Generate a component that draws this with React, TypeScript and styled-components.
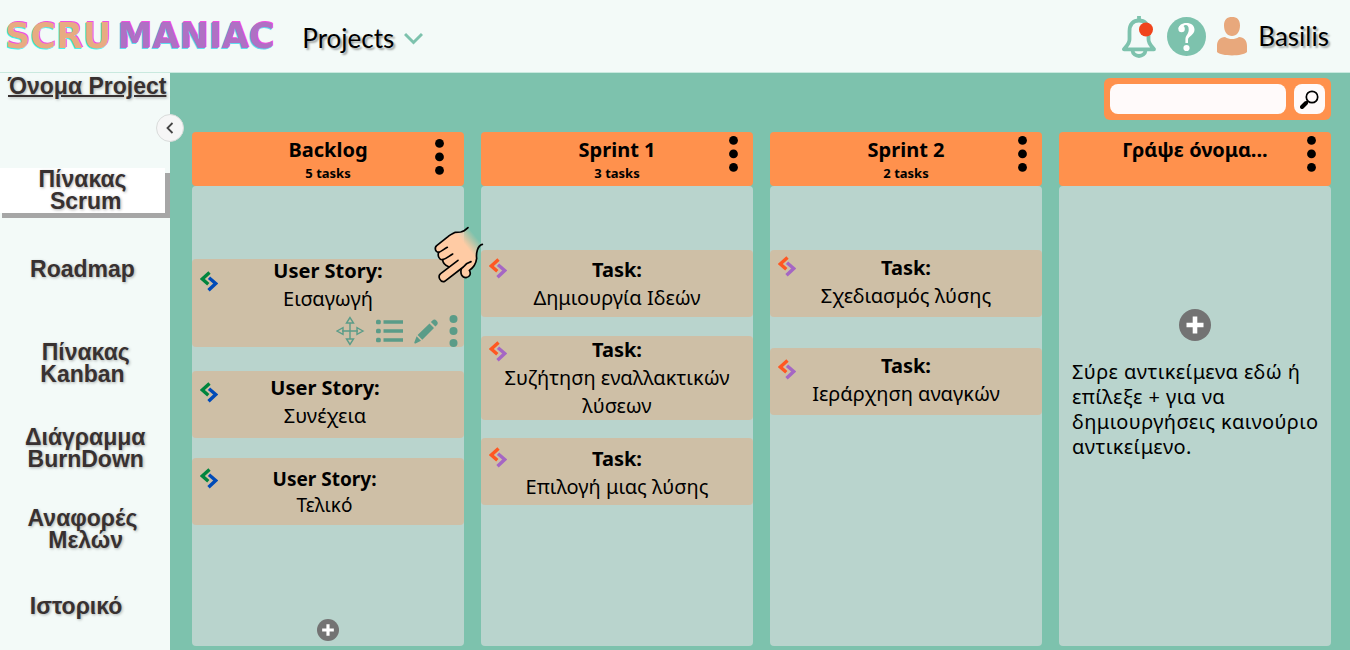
import React from "react";
import styled, { createGlobalStyle } from "styled-components";

const GlobalStyle = createGlobalStyle`
  * { box-sizing: border-box; }
  body { margin: 0; background: #7dc2ad; color: #000; font-family: "Noto Sans", sans-serif; }
  button { border: 0; padding: 0; background: none; color: inherit; font: inherit; cursor: pointer; }
  svg { display: block; flex: none; }
  h1, h2, h3, p { margin: 0; }
`;

const Page = styled.div`
  min-height: 100vh;
  display: flex;
  flex-direction: column;
`;

const TopBar = styled.header`
  height: 73px;
  display: flex;
  align-items: center;
  padding: 0 21px 0 5px;
  background: #f3faf8;
  border-bottom: 1px solid #c9e9df;
`;

const Logo = styled.a`
  display: flex;
  gap: 6px;
  font: bold 35px/40px "DejaVu Sans", sans-serif;
  text-decoration: none;
`;

const LogoWord = styled.span<{ $color: string; $left: string; $right: string }>`
  color: ${(p) => p.$color};
  text-shadow: -1px 1px 0 ${(p) => p.$left}, 1px -1px 0 ${(p) => p.$right};
`;

const TopText = styled.span`
  font: 26px/32px Lato, sans-serif;
  text-shadow: 2px 2px 2px rgba(0, 0, 0, 0.35);
`;

const ProjectsButton = styled.button`
  display: flex;
  align-items: center;
  gap: 10px;
  margin-left: 28px;
  padding-top: 4px;
`;

const Account = styled.div`
  display: flex;
  align-items: center;
  gap: 11px;
  margin-left: auto;
`;

const Main = styled.div`
  flex: 1;
  display: flex;
`;

const Sidebar = styled.aside`
  position: relative;
  flex: none;
  width: 170px;
  background: #f3faf8;
  color: #383131;
  font: bold 23px/22px "Liberation Sans", sans-serif;
  text-shadow: 1px 1px 3px rgba(0, 0, 0, 0.3);
`;

const ProjectName = styled.a`
  display: block;
  margin-top: 2px;
  padding-left: 8px;
  color: inherit;
  white-space: nowrap;
  text-decoration: underline;
  text-decoration-thickness: 2px;
`;

const Nav = styled.nav`
  margin: 71px 5px 0 0;
`;

const NavLink = styled.a<{ $space: number; $active?: boolean }>`
  display: block;
  margin-top: ${(p) => p.$space}px;
  padding-bottom: ${(p) => (p.$active ? 1 : 0)}px;
  background: ${(p) => (p.$active ? "#fff" : "none")};
  box-shadow: ${(p) => (p.$active ? "5px 5px 0 #a6a6a6, 2px 5px 0 #a6a6a6" : "none")};
  color: inherit;
  text-align: center;
  text-decoration: none;
  white-space: pre;
`;

const CollapseButton = styled.button`
  position: absolute;
  top: 41px;
  right: -14px;
  width: 28px;
  height: 28px;
  display: grid;
  place-items: center;
  border: 1px solid #d9dcdb;
  border-radius: 50%;
  background: #f6f6f6;
`;

const Board = styled.main`
  flex: 1;
  min-width: 0;
  display: flex;
  flex-direction: column;
  gap: 12px;
  padding: 5px 19px 4px 22px;
  background: #7dc2ad;
`;

const Search = styled.form`
  align-self: flex-end;
  display: flex;
  gap: 8px;
  padding: 6px;
  border-radius: 6px;
  background: #ff914d;
`;

const SearchInput = styled.input`
  width: 176px;
  height: 30px;
  padding: 0 8px;
  border: 0;
  border-radius: 8px;
  background: #fffafa;
  font: 16px/20px "Noto Sans", sans-serif;
`;

const SearchButton = styled.button`
  width: 31px;
  height: 30px;
  display: grid;
  place-items: center;
  border-radius: 8px;
  background: #fffafa;
`;

const Columns = styled.div`
  flex: 1;
  display: grid;
  grid-template-columns: repeat(4, minmax(0, 1fr));
  gap: 17px;
`;

const Column = styled.section`
  display: flex;
  flex-direction: column;
`;

const ColumnHeader = styled.header`
  display: grid;
  height: 54px;
  border-radius: 4px;
  background: #ff914d;

  > * { grid-area: 1 / 1; }
`;

const ColumnHeading = styled.div`
  padding-top: 4px;
  text-align: center;
  font-weight: bold;
`;

const ColumnTitle = styled.h2`
  font-size: 20px;
  line-height: 28px;
`;

const ColumnCount = styled.p`
  font-size: 13px;
  line-height: 18px;
`;

const MenuButton = styled.button<{ $lower?: boolean }>`
  justify-self: end;
  align-self: start;
  margin: ${(p) => (p.$lower ? "7px 20px 0 0" : "4px 15px 0 0")};
`;

const ColumnBody = styled.div`
  flex: 1;
  display: flex;
  flex-direction: column;
  padding-bottom: 5px;
  border-radius: 4px;
  background: #b9d4cd;
`;

const Card = styled.article<{ $space: number; $tall?: boolean }>`
  position: relative;
  display: grid;
  align-content: start;
  min-height: ${(p) => (p.$tall ? 88 : 67)}px;
  margin-top: ${(p) => p.$space}px;
  border-radius: 4px;
  background: #cebfa6;
`;

const CardMark = styled.span<{ $top: number }>`
  grid-area: 1 / 1;
  padding: ${(p) => p.$top}px 0 0 8px;
`;

const CardText = styled.div<{ $top: number; $right?: number; $small?: boolean }>`
  grid-area: 1 / 1;
  padding: ${(p) => p.$top}px ${(p) => (p.$right || 0) + 16}px 0 16px;
  text-align: center;
  font-size: ${(p) => (p.$small ? 19 : 20)}px;
  line-height: ${(p) => (p.$small ? 24 : 28)}px;
`;

const CardTitle = styled.h3`
  margin-bottom: 2px;
  font-size: inherit;
  line-height: 24px;
`;

const CardTools = styled.div`
  display: flex;
  justify-content: flex-end;
  align-items: center;
  gap: 11px;
  margin-top: 2px;
  padding-right: 6px;
  color: #5a9c88;
`;

const Hand = styled.svg`
  position: absolute;
  top: -44px;
  right: -36px;
  z-index: 2;
  pointer-events: none;
`;

const AddButton = styled.button<{ $top?: number }>`
  align-self: center;
  margin-top: ${(p) => (p.$top ? `${p.$top}px` : "auto")};
`;

const Hint = styled.p`
  margin: 18px 0 0;
  padding: 0 8px 0 13px;
  font-size: 20px;
  line-height: 25px;
  letter-spacing: 0.02em;
`;

const Dots = ({ r = 4.4, step = 13.5, color = "#000" }) => (
  <svg width="9" height={step * 2 + r * 2} viewBox={`0 0 9 ${step * 2 + r * 2}`} fill={color}>
    {[0, 1, 2].map((i) => <circle key={i} cx="4.5" cy={r + i * step} r={r} />)}
  </svg>
);

const Mark = ({ a, b }: { a: string; b: string }) => (
  <svg width="18" height="21" viewBox="0 0 18 21" fill="none" strokeWidth="3.4">
    <path d="M9.5 1.5 2.3 8l6 5.3" stroke={a} />
    <path d="M9 6.7 15.7 12.5 8.5 19.3" stroke={b} />
  </svg>
);

const Plus = ({ size }: { size: number }) => (
  <svg width={size} height={size} viewBox="0 0 32 32">
    <circle cx="16" cy="16" r="16" fill="#737373" />
    <path d="M16 7.5v17M7.5 16h17" stroke="#fff" strokeWidth="4.6" />
  </svg>
);

const PointingHand = () => (
  <Hand width="80" height="80" viewBox="0 0 240 240" fill="none" aria-hidden="true">
    <defs>
      <linearGradient id="wrist" gradientUnits="userSpaceOnUse" x1="134" y1="88" x2="166" y2="62">
        <stop offset="0" stopColor="#ffcba4" />
        <stop offset="1" stopColor="#ffcba4" stopOpacity="0" />
      </linearGradient>
    </defs>
    <path
      fill="url(#wrist)"
      d="M144 38C137 45 130 50 122 51L106 52C98 56 90 60 84 65L50 92C42 99 47 113 56 112C52 122 58 136 68 134C68 142 74 150 86 155L62 176C52 184 60 203 74 199L124 162C120 176 126 188 138 188C150 186 154 176 148 166C160 158 168 148 170 130C168 115 172 92 188 88Z"
    />
    <g stroke="#000" strokeWidth="5" strokeLinecap="round" strokeLinejoin="round">
      <path d="M144 38C137 45 130 50 122 51L106 52C98 56 90 60 84 65L50 92C42 99 47 113 56 112C62 111 72 102 82 97" />
      <path d="M56 112C52 122 58 136 68 134C78 132 86 124 98 117" />
      <path d="M68 134C68 142 74 150 86 155" />
      <path d="M114 136L62 176C52 184 60 203 74 199L130 156C138 146 146 142 153 140" />
      <path d="M124 162C120 176 126 188 138 188C150 186 154 176 148 166C160 158 168 148 170 130C168 115 172 92 187 88" />
    </g>
  </Hand>
);

const StoryTools = () => (
  <CardTools>
    <button aria-label="Move">
      <svg width="29" height="30" viewBox="0 0 29 30" fill="none" stroke="currentColor" strokeWidth="1.4">
        <path d="M14 7v16M6 15h16M14 1.5l-3.5 5.5h7zM14 28.5l-3.5-5.5h7zM1 15l6-3.3v6.6zM27 15l-6-3.3v6.6z" />
      </svg>
    </button>
    <button aria-label="Details">
      <svg width="27" height="24" viewBox="0 0 27 24" fill="currentColor">
        <path d="M7.5 1.2h19.5v3.6h-19.5zM7.5 10.2h19.5v3.6h-19.5zM7.5 19.2h19.5v3.6h-19.5z" />
        <rect y="0.7" width="4.8" height="4.6" rx="1.5" />
        <rect y="9.7" width="4.8" height="4.6" rx="1.5" />
        <rect y="18.7" width="4.8" height="4.6" rx="1.5" />
      </svg>
    </button>
    <button aria-label="Edit">
      <svg width="24" height="25" viewBox="0 0 24 25" fill="currentColor">
        <path d="M15.5 4.5 20 9 8.3 20.7 3.6 16.1zM16.9 3.1 18.7 1.2Q20.5-.2 22.6 1.7 24.6 3.8 23.2 5.7L21.4 7.6zM2.6 17.3 7 21.7 1.5 24.5Q0 24.8.4 23.2z" />
      </svg>
    </button>
    <button aria-label="More">
      <Dots r={4} step={12} color="#5a9c88" />
    </button>
  </CardTools>
);

type Item = {
  kind: string; text: string; space: number; markTop: number; textTop: number;
  right?: number; small?: boolean; selected?: boolean;
};
type ColumnData = { title: string; count: string; lower?: boolean; items: Item[] };

const columns: ColumnData[] = [
  {
    title: "Backlog", count: "5 tasks", lower: true,
    items: [
      { kind: "User Story:", text: "Εισαγωγή", space: 73, markTop: 12, textTop: 0, selected: true },
      { kind: "User Story:", text: "Συνέχεια", space: 24, markTop: 11, textTop: 5, right: 6 },
      { kind: "User Story:", text: "Τελικό", space: 20, markTop: 10, textTop: 9, right: 7, small: true },
    ],
  },
  {
    title: "Sprint 1", count: "3 tasks",
    items: [
      { kind: "Task:", text: "Δημιουργία Ιδεών", space: 64, markTop: 8, textTop: 8 },
      { kind: "Task:", text: "Συζήτηση εναλλακτικών λύσεων", space: 19, markTop: 5, textTop: 2 },
      { kind: "Task:", text: "Επιλογή μιας λύσης", space: 18, markTop: 9, textTop: 9 },
    ],
  },
  {
    title: "Sprint 2", count: "2 tasks",
    items: [
      { kind: "Task:", text: "Σχεδιασμός λύσης", space: 64, markTop: 6, textTop: 6 },
      { kind: "Task:", text: "Ιεράρχηση αναγκών", space: 31, markTop: 11, textTop: 6 },
    ],
  },
  { title: "Γράψε όνομα...", count: "", items: [] },
];

const links = [
  { label: "Πίνακας\n Scrum", space: 0, active: true },
  { label: "Roadmap", space: 45 },
  { label: " Πίνακας\nKanban", space: 61 },
  { label: " Διάγραμμα\n BurnDown", space: 41 },
  { label: "Αναφορές\n Μελών", space: 37 },
  { label: "Ιστορικό  ", space: 44 },
];

export default function App() {
  return (
    <Page>
      <GlobalStyle />
      <TopBar>
        <Logo href="#">
          <LogoWord $color="#e8ab82" $left="#3ff5f0" $right="#f04fe0">SCRU</LogoWord>
          <LogoWord $color="#b070c4" $left="#5fdcf0" $right="#f04fe0">MANIAC</LogoWord>
        </Logo>
        <ProjectsButton>
          <TopText>Projects</TopText>
          <svg width="19" height="13" viewBox="0 0 19 13" fill="none" stroke="#7dc2ad" strokeWidth="3">
            <path d="M1 2l8.5 8.5L18 2" />
          </svg>
        </ProjectsButton>
        <Account>
          <button aria-label="Notifications">
            <svg width="34" height="43" viewBox="0 0 34 43" fill="none" stroke="#7dc2ad" strokeWidth="3.8" strokeLinejoin="round">
              <path d="M17 1v4M2 34.3h30c-4-5-5.5-6-5.5-10v-8C26.5 9 22.5 5.5 17 5.5S7.5 9 7.500 16.300v8c0 4-1.500 5-5.500 10zM10.500 35.500c.8 7.300 12.200 7.300 13 0" />
              <circle cx="24" cy="14.5" r="7" fill="#f0441c" stroke="none" />
            </svg>
          </button>
          <button aria-label="Help">
            <svg width="39" height="39" viewBox="0 0 39 39">
              <circle cx="19.5" cy="19.5" r="19.5" fill="#7dc2ad" />
              <circle cx="14.6" cy="12" r="3.2" fill="#fff" />
              <path d="M11.6 12C11.6 8.3 15 6 19.3 6c5 0 8.2 2.5 8.2 6.7 0 5.6-6.5 6-6.5 10.3v3h-2.600v-3.500c0-4.600 3.300-5.200 3.300-9.800 0-3.200-1-4.700-3-4.700-1.900 0-2.700 1.300-2.700 4z" fill="#fff" />
              <circle cx="19.5" cy="31" r="3.1" fill="#fff" />
            </svg>
          </button>
          <svg width="30" height="39" viewBox="0 0 30 39" fill="#e8a87c">
            <path d="M15 0c5 0 8 2.5 8 8.5C23 15 19.5 19 15 19S7 15 7 8.5C7 2.5 10 0 15 0zM8 20c4.500 2.700 9.500 2.700 14 0 5 .3 8 3.500 8 9v6c-4 4.500-26 4.500-30 0v-6c0-5.500 3-8.700 8-9z" />
          </svg>
          <TopText>Basilis</TopText>
        </Account>
      </TopBar>
      <Main>
        <Sidebar>
          <ProjectName href="#">Όνομα Project</ProjectName>
          <Nav>
            {links.map((l) => (
              <NavLink key={l.label} href="#" $space={l.space} $active={l.active}>{l.label}</NavLink>
            ))}
          </Nav>
          <CollapseButton aria-label="Collapse sidebar">
            <svg width="8" height="12" viewBox="0 0 8 12" fill="none" stroke="#444" strokeWidth="1.8">
              <path d="M6.5 1 1.5 6l5 5" />
            </svg>
          </CollapseButton>
        </Sidebar>
        <Board>
          <Search>
            <SearchInput type="search" aria-label="Search" />
            <SearchButton type="button" aria-label="Search">
              <svg width="19" height="19" viewBox="0 0 19 19" fill="none" stroke="#000">
                <circle cx="12" cy="7" r="5.7" strokeWidth="1.7" />
                <path d="M8 11 6 13" strokeWidth="1.8" />
                <path d="M6 13 2 17" strokeWidth="4" strokeLinecap="round" />
              </svg>
            </SearchButton>
          </Search>
          <Columns>
            {columns.map((c, i) => (
              <Column key={c.title}>
                <ColumnHeader>
                  <ColumnHeading>
                    <ColumnTitle>{c.title}</ColumnTitle>
                    {c.count && <ColumnCount>{c.count}</ColumnCount>}
                  </ColumnHeading>
                  <MenuButton $lower={c.lower} aria-label="Column menu"><Dots /></MenuButton>
                </ColumnHeader>
                <ColumnBody>
                  {c.items.map((t) => (
                    <Card key={t.text} $space={t.space} $tall={t.selected}>
                      <CardMark $top={t.markTop}>
                        {i === 0 ? <Mark a="#00853e" b="#004bb8" /> : <Mark a="#ff5722" b="#a566c4" />}
                      </CardMark>
                      <CardText $top={t.textTop} $right={t.right} $small={t.small}>
                        <CardTitle>{t.kind}</CardTitle>
                        <p>{t.text}</p>
                      </CardText>
                      {t.selected && <StoryTools />}
                      {t.selected && <PointingHand />}
                    </Card>
                  ))}
                  {i === 0 && <AddButton aria-label="Add story"><Plus size={22} /></AddButton>}
                  {i === 3 && (
                    <>
                      <AddButton $top={123} aria-label="Add item"><Plus size={32} /></AddButton>
                      <Hint>Σύρε αντικείμενα εδώ ή επίλεξε + για να δημιουργήσεις καινούριο αντικείμενο.</Hint>
                    </>
                  )}
                </ColumnBody>
              </Column>
            ))}
          </Columns>
        </Board>
      </Main>
    </Page>
  );
}
